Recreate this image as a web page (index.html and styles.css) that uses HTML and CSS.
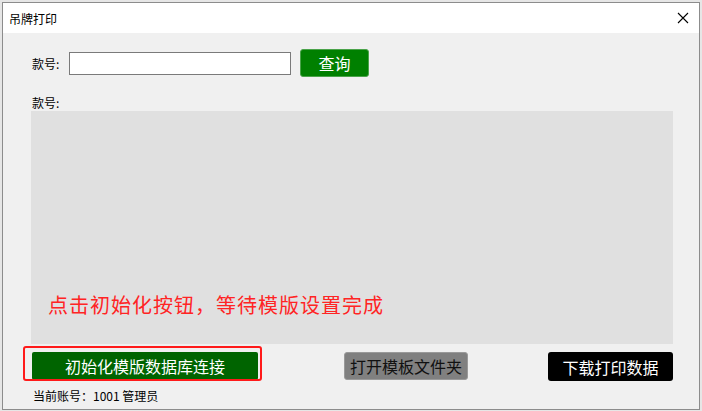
FILE: index.html
```html
<!DOCTYPE html>
<html lang="zh-CN">
<head>
    <meta charset="UTF-8">
    <title>吊牌打印</title>
    <link rel="stylesheet" href="styles.css">
</head>
<body>
    <div class="window">
        <!-- Title Bar -->
        <div class="titlebar">
            <span class="title">吊牌打印</span>
            <svg class="close" width="12" height="12" viewBox="0 0 12 12">
                <path d="M1 1 L11 11 M11 1 L1 11" stroke="#000" stroke-width="1.1" fill="none"/>
            </svg>
        </div>

        <div class="content">
            <!-- Search -->
            <div class="search-row">
                <label for="code">款号:</label>
                <input type="text" id="code">
                <button class="btn btn-query">查询</button>
            </div>

            <div class="label-row">款号:</div>

            <!-- Result Area -->
            <div class="result">
                <p class="hint">点击初始化按钮，等待模版设置完成</p>
            </div>

            <!-- Actions -->
            <div class="actions">
                <button class="btn btn-init">初始化模版数据库连接</button>
                <button class="btn btn-folder">打开模板文件夹</button>
                <button class="btn btn-download">下载打印数据</button>
            </div>

            <div class="status">当前账号：1001 管理员</div>
        </div>
    </div>
</body>
</html>
```

FILE: styles.css
```css
/* Global Styles */
:root {
    --bg-window: #f0f0f0;
    --bg-area: #e0e0e0;
    --green: #008000;
    --dark-green: #006400;
    --hint-red: #ff2424;
}

* {
    box-sizing: border-box;
}

body {
    margin: 0;
    padding: 0;
    background-color: #e6e6e6;
    font-family: "Noto Sans CJK SC", "Microsoft YaHei", sans-serif;
    color: #000;
}

.window {
    margin: 2px 2px 0 2px;
    height: 408px;
    border: 1px solid #8c8c8c;
    background-color: var(--bg-window);
    display: flex;
    flex-direction: column;
}

.titlebar {
    height: 30px;
    background-color: #ffffff;
    display: flex;
    align-items: center;
    justify-content: space-between;
    padding: 0 10px 0 6px;
}

.title {
    font-size: 12px;
}

.content {
    flex: 1;
    padding: 16px 26px 0 28px;
}

.search-row {
    display: flex;
    align-items: center;
    height: 28px;
    font-size: 12px;
}

.search-row label {
    width: 38px;
    padding-left: 1px;
}

.search-row input {
    width: 222px;
    height: 23px;
    border: 1px solid #7a7a7a;
    background: #fff;
    margin: 0;
    padding: 0 3px;
}

.btn {
    font-family: inherit;
    font-size: 16px;
    border: none;
    border-radius: 3px;
    padding: 0;
    cursor: pointer;
    display: flex;
    align-items: center;
    justify-content: center;
}

.btn-query {
    margin-left: 9px;
    width: 69px;
    height: 28px;
    background-color: var(--green);
    color: #fff;
    border: 1px solid #4aa34a;
}

.label-row {
    font-size: 12px;
    margin-top: 17px;
    height: 17px;
    padding-left: 1px;
}

.result {
    margin-top: 0;
    height: 233px;
    background-color: var(--bg-area);
    display: flex;
    flex-direction: column;
    justify-content: flex-end;
    padding: 0 0 25px 17px;
}

.hint {
    margin: 0;
    font-size: 20px;
    color: var(--hint-red);
    letter-spacing: 1px;
}

.actions {
    margin-top: 8px;
    display: flex;
    align-items: flex-start;
}

.btn-init {
    position: relative;
    margin-left: 1px;
    width: 226px;
    height: 28px;
    background-color: var(--dark-green);
    color: #fff;
    border-radius: 2px;
}

/* red highlight drawn over the init button */
.btn-init::after {
    content: "";
    position: absolute;
    top: -6px;
    left: -9px;
    right: -4px;
    bottom: -1px;
    border: 2px solid #ff1a1a;
    border-radius: 3px;
}

.btn-folder {
    margin-left: 86px;
    width: 124px;
    height: 28px;
    background-color: #808080;
    color: #111;
    border: 1px solid #9a9a9a;
}

.btn-download {
    margin-left: auto;
    width: 125px;
    height: 29px;
    background-color: #000;
    color: #fff;
}

.status {
    font-size: 12px;
    margin-top: 6px;
    padding-left: 2px;
}
```
